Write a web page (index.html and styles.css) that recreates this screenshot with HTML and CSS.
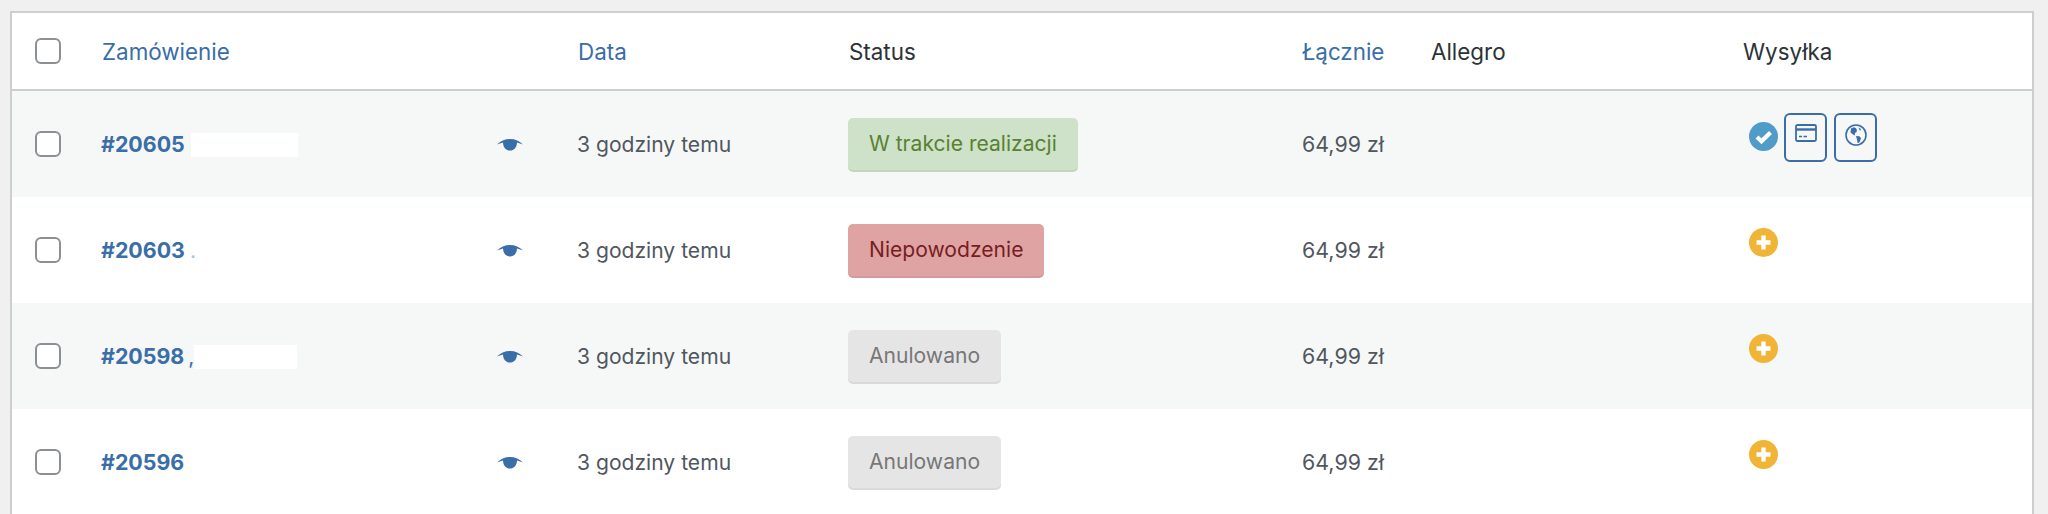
FILE: index.html
```html
<!DOCTYPE html>
<html lang="pl">
<head>
	<meta charset="UTF-8">
	<title>Zamówienia</title>
	<link rel="stylesheet" href="styles.css">
</head>
<body>
	<svg class="defs" width="0" height="0">
		<symbol id="eye" viewBox="0 0 26 12">
			<path d="M0 5.600C3.400 2 7.800 0 13 0s9.600 2 13 5.600c-1.800-.9-3.800-1.700-6-2.200C19.800 8.400 17 11.500 13 11.500S6.200 8.400 6 3.400C3.800 3.900 1.800 4.700 0 5.600z"/>
		</symbol>
	</svg>
	<table class="orders">
		<thead>
			<tr>
				<th class="col-check"><span class="check"></span></th>
				<th class="col-order"><a href="#">Zamówienie</a></th>
				<th class="col-date"><a href="#">Data</a></th>
				<th class="col-status">Status</th>
				<th class="col-total"><a href="#">Łącznie</a></th>
				<th class="col-allegro">Allegro</th>
				<th class="col-ship">Wysyłka</th>
			</tr>
		</thead>
		<tbody>
			<tr>
				<td><span class="check"></span></td>
				<td>
					<div class="order">
						<a class="num" href="#">#20605</a><span class="mask mask-a"></span>
						<svg class="eye"><use href="#eye"/></svg>
					</div>
				</td>
				<td class="date">3 godziny temu</td>
				<td><span class="badge green">W trakcie realizacji</span></td>
				<td class="total">64,99 zł</td>
				<td></td>
				<td>
					<div class="ship">
						<svg class="dot" viewBox="0 0 29 29"><circle cx="14.500" cy="14.500" r="14.500" fill="#4f9cc9"/><path d="M8 15l4.500 4.300L21.500 10.500" fill="none" stroke="#fff" stroke-width="4.200"/></svg>
						<span class="ship-btn">
							<svg viewBox="0 0 22 18" width="22" height="18"><rect x="1" y="1" width="20" height="16" rx="1.500" fill="none" stroke="#3a6ea8" stroke-width="1.800"/><path d="M1 5.500h20" stroke="#3a6ea8" stroke-width="2.400"/><path d="M4 12.500h3M8.500 12.500h3.500" stroke="#3a6ea8" stroke-width="1.500"/></svg>
						</span>
						<span class="ship-btn">
							<svg viewBox="0 0 22 22" width="22" height="22"><circle cx="11" cy="11" r="10" fill="none" stroke="#3a6ea8" stroke-width="1.600"/><path d="M6 4.500l3-1.300 2 1 1 2-.5 1.800-1.500 1-.3 2.500L8 10.500 5.500 8.500zM13.500 3.500l2.500 1.500-1 2zM11 12l3.500.2 1.500 2-1.500 4-1.800 1-.7-3.500z" fill="#3a6ea8"/></svg>
						</span>
					</div>
				</td>
			</tr>
			<tr>
				<td><span class="check"></span></td>
				<td>
					<div class="order">
						<a class="num" href="#">#20603</a><span class="speck">.</span>
						<svg class="eye"><use href="#eye"/></svg>
					</div>
				</td>
				<td class="date">3 godziny temu</td>
				<td><span class="badge red">Niepowodzenie</span></td>
				<td class="total">64,99 zł</td>
				<td></td>
				<td><div class="ship"><svg class="dot" viewBox="0 0 29 29"><circle cx="14.500" cy="14.500" r="14.500" fill="#f0b437"/><path d="M14.500 7.500v14M7.500 14.500h14" stroke="#fff" stroke-width="4.400"/></svg></div></td>
			</tr>
			<tr>
				<td><span class="check"></span></td>
				<td>
					<div class="order">
						<a class="num" href="#">#20598</a><span class="speck speck-b">,</span><span class="mask mask-b"></span>
						<svg class="eye"><use href="#eye"/></svg>
					</div>
				</td>
				<td class="date">3 godziny temu</td>
				<td><span class="badge gray">Anulowano</span></td>
				<td class="total">64,99 zł</td>
				<td></td>
				<td><div class="ship"><svg class="dot" viewBox="0 0 29 29"><circle cx="14.500" cy="14.500" r="14.500" fill="#f0b437"/><path d="M14.500 7.500v14M7.500 14.500h14" stroke="#fff" stroke-width="4.400"/></svg></div></td>
			</tr>
			<tr>
				<td><span class="check"></span></td>
				<td>
					<div class="order">
						<a class="num" href="#">#20596</a>
						<svg class="eye"><use href="#eye"/></svg>
					</div>
				</td>
				<td class="date">3 godziny temu</td>
				<td><span class="badge gray">Anulowano</span></td>
				<td class="total">64,99 zł</td>
				<td></td>
				<td><div class="ship"><svg class="dot" viewBox="0 0 29 29"><circle cx="14.500" cy="14.500" r="14.500" fill="#f0b437"/><path d="M14.500 7.500v14M7.500 14.500h14" stroke="#fff" stroke-width="4.400"/></svg></div></td>
			</tr>
		</tbody>
	</table>
</body>
</html>
```

FILE: styles.css
```css
* {
	margin: 0;
	padding: 0;
	box-sizing: border-box;
}
html, body {
	height: 100%;
	overflow: hidden;
}
body {
	background-color: #f0f0f1;
	padding: 11px 14px 0 10px;
	font-family: Inter, "Liberation Sans", sans-serif;
	font-size: 21.1px;
	color: #50575e;
}
a {
	color: #3a6ea8;
	text-decoration: none;
}
.defs {
	display: none;
}
.orders {
	width: 100%;
	table-layout: fixed;
	border-collapse: separate;
	border-spacing: 0;
	background-color: #fff;
	border: 2px solid #cdcecf;
}
th {
	height: 78px;
	text-align: left;
	font-size: 22.4px;
	font-weight: 400;
	color: #2c3338;
	border-bottom: 2px solid #cdcecf;
	vertical-align: middle;
}
td {
	height: 106px;
	padding-top: 27px;
	vertical-align: top;
	line-height: 53px;
}
tbody tr:nth-child(odd) {
	background-color: #f6f7f7;
}
.col-check {
	width: 89px;
}
.col-order {
	width: 477px;
	padding-left: 1px;
}
.col-date {
	width: 270px;
}
.col-status {
	width: 454px;
	padding-left: 1px;
}
.col-total {
	width: 129px;
}
.col-allegro {
	width: 312px;
}
.date {
	text-indent: -1px;
}
.total {
	font-size: 21.4px;
}
.check {
	display: block;
	width: 26px;
	height: 26px;
	margin-left: 23px;
	background-color: #fff;
	border: 2px solid #8c8f94;
	border-radius: 6px;
}
td .check {
	margin-top: 13px;
}
.order {
	display: flex;
	align-items: center;
	height: 53px;
	padding-right: 55px;
}
.num {
	font-size: 21.4px;
	font-weight: 650;
}
.mask {
	height: 24px;
	background-color: #fff;
}
.mask-a {
	width: 107px;
	margin-left: 6px;
}
.mask-b {
	width: 103px;
}
.speck {
	color: #a9c2dd;
	margin-left: 5px;
}
.speck-b {
	color: #3a6ea8;
	margin-left: 4px;
}
.eye {
	width: 26px;
	height: 12px;
	margin-left: auto;
	fill: #3a6ea8;
}
.badge {
	display: inline-block;
	vertical-align: top;
	height: 54px;
	padding: 0 21px;
	border-radius: 5px;
	line-height: 52px;
	box-shadow: inset 0 -2px 0 rgba(0, 0, 0, .05);
}
.green {
	background-color: #cde2c8;
	color: #5b8032;
}
.red {
	background-color: #e0a3a4;
	color: #761f22;
}
.gray {
	background-color: #e5e5e5;
	color: #777;
}
.ship {
	display: flex;
	align-items: flex-start;
	gap: 6px;
	margin-top: -5px;
	margin-left: 6px;
	line-height: 1;
}
.dot {
	width: 29px;
	height: 29px;
	margin-top: 9px;
}
.ship-btn {
	display: flex;
	justify-content: center;
	width: 43px;
	height: 49px;
	padding-top: 9px;
	border: 2px solid #3a6ea8;
	border-radius: 6px;
}
.ship-btn + .ship-btn {
	margin-left: 1px;
}
```
